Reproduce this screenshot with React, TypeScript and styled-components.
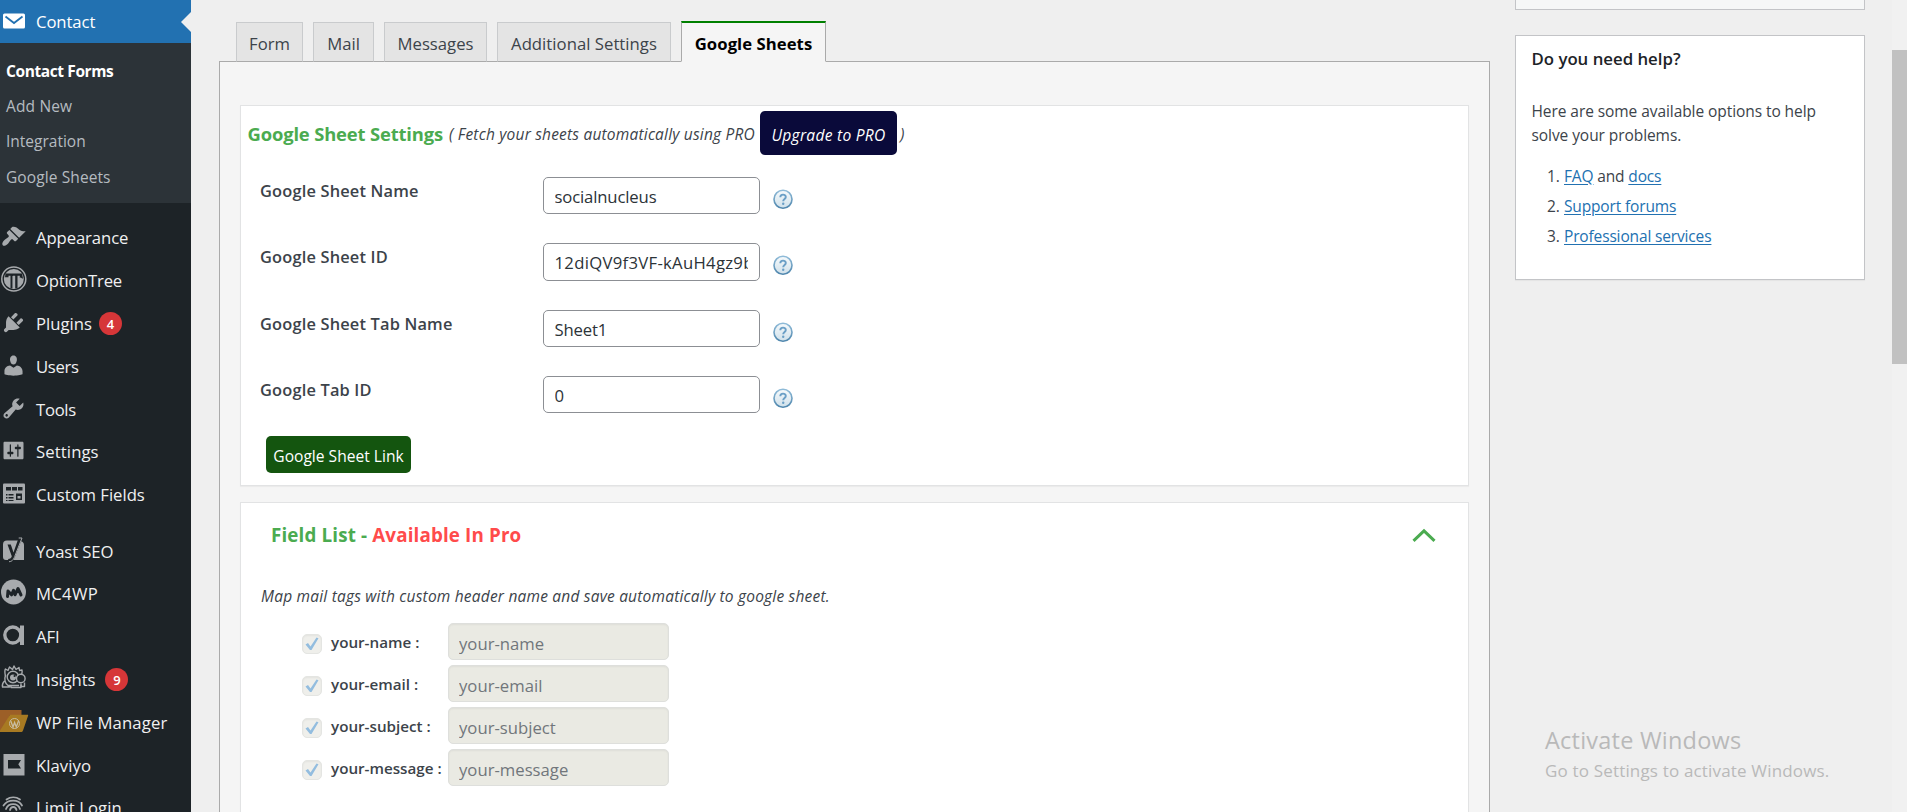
import React from "react";
import styled, { createGlobalStyle } from "styled-components";

const Global = createGlobalStyle`
  *, *::before, *::after { box-sizing: border-box; }
  body { margin: 0; overflow: hidden; background: #efefef; }
  body, input, button { font-family: "Open Sans", "Noto Sans", sans-serif; }
`;

const Page = styled.div`
  display: flex;
  width: 1907px;
  height: 812px;
  overflow: hidden;
  position: relative;
  color: #3c434a;
`;

/* ---------- admin menu ---------- */

const Sidebar = styled.nav`
  flex: none;
  width: 191px;
  background: #1d2327;
`;

const MenuRow = styled.a<{ $active?: boolean }>`
  display: flex;
  align-items: center;
  position: relative;
  height: ${(p) => (p.$active ? "43px" : "42.8px")};
  padding-left: 1px;
  color: ${(p) => (p.$active ? "#fff" : "#f0f0f1")};
  background: ${(p) => (p.$active ? "#2271b1" : "transparent")};
  font-size: 16.7px;
  white-space: nowrap;
`;

const ActiveArrow = styled.span`
  position: absolute;
  right: 0;
  top: 12px;
  border: 10px solid transparent;
  border-left-width: 0;
  border-right-color: #efefef;
`;

const IconSlot = styled.span`
  flex: none;
  display: flex;
  width: 35px;
  color: #a7aaad;
  margin-top: -2px;
`;

const MenuLabel = styled.span<{ $ls?: number }>`
  letter-spacing: ${(p) => p.$ls ?? -0.1}px;
`;

const Badge = styled.span<{ $gap: number }>`
  display: flex;
  align-items: center;
  justify-content: center;
  width: 23px;
  height: 23px;
  margin-left: ${(p) => p.$gap}px;
  border-radius: 50%;
  background: #d63638;
  color: #fff;
  font-size: 13px;
  font-weight: 600;
`;

const Submenu = styled.div`
  height: 160px;
  padding-top: 10px;
  background: #2c3338;
`;

const SubItem = styled.a<{ $current?: boolean; $ls?: number }>`
  display: flex;
  align-items: center;
  height: 35.3px;
  padding-left: 6px;
  font-size: 15.5px;
  font-weight: ${(p) => (p.$current ? 700 : 400)};
  color: ${(p) => (p.$current ? "#fff" : "#b5bbc0")};
  letter-spacing: ${(p) => p.$ls ?? 0}px;
`;

const MenuGroup = styled.div`
  padding-top: 13.6px;
`;

/* ---------- main column ---------- */

const Main = styled.main`
  flex: none;
  width: 1271px;
  margin-left: 28px;
  display: flex;
  flex-direction: column;
`;

const Tabs = styled.div`
  display: flex;
  align-items: flex-end;
  gap: 10px;
  height: 62px;
  margin-bottom: -1px;
  padding-left: 17px;
  z-index: 1;
`;

const Tab = styled.button<{ $w: number; $active?: boolean; $ls?: number }>`
  width: ${(p) => p.$w}px;
  height: ${(p) => (p.$active ? 41 : 40)}px;
  padding: 3px 0 0;
  border: 1px solid ${(p) => (p.$active ? "#aaa" : "#c9cbcd")};
  border-bottom-color: ${(p) => (p.$active ? "#f5f5f5" : "#aaa")};
  border-top: ${(p) => (p.$active ? "2px solid #008000" : "1px solid #c9cbcd")};
  background: ${(p) => (p.$active ? "#f5f5f5" : "#e4e4e4")};
  color: ${(p) => (p.$active ? "#000" : "#3c434a")};
  font-size: 16.7px;
  font-weight: ${(p) => (p.$active ? 700 : 400)};
  letter-spacing: ${(p) => p.$ls ?? 0}px;
  white-space: nowrap;
`;

const Panel = styled.section`
  flex: 1;
  border: 1px solid #aaa;
  border-bottom: 0;
  background: #f5f5f5;
  padding: 43px 20px 0;
  overflow: hidden;
`;

const Card = styled.div<{ $h: number }>`
  height: ${(p) => p.$h}px;
  margin-bottom: 16px;
  border: 1px solid #e2e3e4;
  background: #fff;
  box-shadow: 0 1px 1px rgba(0, 0, 0, 0.04);
`;

const SettingsHead = styled.div`
  display: flex;
  align-items: center;
  height: 44px;
  margin: 5px 0 0 6.5px;
  white-space: nowrap;
`;

const Heading = styled.h2<{ $size: number; $ls?: number }>`
  margin: 0;
  font-size: ${(p) => p.$size}px;
  font-weight: 700;
  color: #4bab50;
  letter-spacing: ${(p) => p.$ls ?? 0}px;
`;

const ProNote = styled.span`
  color: #ff4b4b;
`;

const Hint = styled.span<{ $ml?: number }>`
  margin-left: ${(p) => p.$ml ?? 0}px;
  padding-top: 2px;
  font-size: 15.5px;
  font-style: italic;
  color: #3c434a;
  letter-spacing: 0.2px;
`;

const UpgradeButton = styled.a`
  display: flex;
  align-items: center;
  justify-content: center;
  width: 137px;
  height: 44px;
  padding-top: 3px;
  margin-left: 5px;
  border-radius: 5px;
  background: #0a0a3a;
  color: #fff;
  font-size: 15.6px;
  font-style: italic;
  letter-spacing: 0.25px;
`;

const SettingRow = styled.div`
  display: flex;
  height: 66.3px;
  padding-left: 19px;
`;

const SettingsForm = styled.div`
  padding-top: 22px;
`;

const SettingLabel = styled.label`
  width: 283px;
  font-size: 16.4px;
  font-weight: 600;
  line-height: 27px;
  letter-spacing: 0.17px;
`;

const SettingInput = styled.input<{ $ls?: number }>`
  width: 217px;
  height: 37.400px;
  padding: 2px 11px 0 10.500px;
  border: 1px solid #8c8f94;
  border-radius: 5px;
  background: #fff;
  color: #2c3338;
  font-size: 16.7px;
  letter-spacing: ${(p) => p.$ls ?? -0.15}px;
  outline: none;
`;

const HelpSlot = styled.span`
  margin: 12px 0 0 13px;
`;

const LinkButton = styled.button`
  display: block;
  width: 145px;
  height: 37px;
  margin: -6px 0 0 25px;
  padding: 3px 0 0;
  border: 0;
  border-radius: 5px;
  background: #14550f;
  color: #fff;
  font-size: 15.6px;
  white-space: nowrap;
`;

const FieldHead = styled.div`
  display: flex;
  align-items: center;
  justify-content: space-between;
  height: 64px;
  padding: 0 30px 0 30px;
`;

const FieldHint = styled.p`
  margin: 16px 0 13px 20px;
  line-height: 27px;
`;

const FieldRow = styled.div`
  display: flex;
  align-items: center;
  height: 37px;
  margin: 0 0 5px 61px;
`;

const Check = styled.span`
  flex: none;
  display: flex;
  align-items: center;
  justify-content: center;
  width: 20px;
  height: 20px;
  margin-top: 4px;
  border: 1px solid #e4e5e2;
  border-radius: 5px;
  background: #efefeb;
  box-shadow: inset 0 1px 2px rgba(0, 0, 0, 0.05);
`;

const FieldLabel = styled.label`
  flex: none;
  width: 126px;
  padding-left: 9px;
  font-size: 15.2px;
  font-weight: 600;
  white-space: nowrap;
`;

const FieldInput = styled.input`
  width: 221px;
  height: 37px;
  padding: 3px 10px 0;
  border: 1px solid #dedfdc;
  border-radius: 5px;
  background: #eaeae3;
  box-shadow: inset 0 1px 2px rgba(0, 0, 0, 0.05);
  color: #71767b;
  font-size: 16.7px;
  outline: none;
`;

/* ---------- right column ---------- */

const Aside = styled.aside`
  flex: none;
  width: 350px;
  margin-left: 25px;
`;

const StubBox = styled.div`
  height: 10px;
  border: 1px solid #c3c4c7;
  border-top: 0;
  background: #f6f7f7;
  margin-bottom: 25px;
`;

const HelpBox = styled.div`
  height: 245px;
  padding: 9px 15.500px 0;
  border: 1px solid #c3c4c7;
  background: #fff;
  box-shadow: 0 1px 1px rgba(0, 0, 0, 0.04);
`;

const HelpTitle = styled.h3`
  margin: 0 0 27px;
  font-size: 16.8px;
  font-weight: 600;
  line-height: 27px;
  color: #1d2327;
`;

const HelpText = styled.p`
  margin: 0 0 13.5px;
  font-size: 15.5px;
  line-height: 24px;
  letter-spacing: -0.07px;
  white-space: nowrap;
`;

const HelpItem = styled.div`
  display: flex;
  height: 30.1px;
  align-items: center;
  padding-left: 15.500px;
  font-size: 15.5px;
  letter-spacing: -0.15px;
  white-space: pre;
`;

const Num = styled.span`
  width: 17px;
`;

const A = styled.a`
  color: #2271b1;
  text-decoration: underline;
  text-underline-offset: 2px;
`;

const Scrollbar = styled.div`
  flex: none;
  width: 15px;
  margin-left: auto;
  padding-top: 50px;
  background: #f1f1f1;
`;

const Thumb = styled.div`
  height: 314px;
  background: #c1c1c1;
`;

const Watermark = styled.div`
  position: absolute;
  left: 1545px;
  top: 722px;
  color: #b9b9b9;
  white-space: nowrap;
`;

const WatermarkTitle = styled.div`
  font-size: 23.5px;
  line-height: 36px;
  letter-spacing: 0.22px;
`;

const WatermarkText = styled.div`
  font-size: 17px;
  line-height: 25px;
  letter-spacing: 0.17px;
`;

/* ---------- drawings ---------- */

const dash: Record<string, string> = {
  appearance:
    "M14.48 11.06L7.41 3.99l1.5-1.5c.5-.56 2.3-.47 3.51.32 1.21.8 1.43 1.28 2.91 2.1 1.18.64 2.45 1.26 4.45.85zm-.71.71L6.7 4.7 4.93 6.47c-.39.39-.39 1.02 0 1.41l1.06 1.06c.39.39.39 1.03 0 1.42-.6.6-1.43 1.11-2.21 1.69-.35.26-.7.53-1.01.84C1.43 14.23.4 16.08 1.4 17.07c.99 1 2.84-.03 4.18-1.36.31-.31.58-.66.85-1.02.57-.78 1.08-1.61 1.69-2.21.39-.39 1.02-.39 1.41 0l1.06 1.06c.39.39 1.02.39 1.41 0z",
  plugins:
    "M13.11 4.36L9.87 7.6 8 5.73l3.24-3.24c.35-.34 1.05-.2 1.56.32.52.51.66 1.21.31 1.55zm-8 1.77l.91-1.12 9.01 9.01-1.19.84c-.71.71-2.63 1.16-3.82 1.16H6.14L4.9 17.26c-.59.59-1.54.59-2.12 0-.59-.58-.59-1.53 0-2.12l1.24-1.24v-3.88c0-1.13.4-3.19 1.09-3.89zm7.26 3.97l3.24-3.24c.34-.35 1.04-.21 1.55.31.52.51.66 1.21.31 1.55l-3.24 3.25z",
  users:
    "M10 9.25c-2.27 0-2.73-3.44-2.73-3.44C7 4.02 7.82 2 9.97 2c2.16 0 2.98 2.02 2.71 3.81 0 0-.41 3.44-2.68 3.44zm0 2.57L12.72 10c2.39 0 4.52 2.33 4.52 4.53v2.49s-3.65 1.13-7.24 1.13c-3.65 0-7.24-1.13-7.24-1.13v-2.49c0-2.25 1.94-4.48 4.47-4.48z",
  tools:
    "M16.68 9.77c-1.34 1.34-3.3 1.67-4.95.99l-5.41 6.52c-.99.99-2.59.99-3.58 0s-.99-2.59 0-3.57l6.52-5.42c-.68-1.65-.35-3.61.99-4.95 1.28-1.28 3.12-1.62 4.72-1.06l-2.89 2.89 2.82 2.82 2.86-2.87c.53 1.58.18 3.39-1.08 4.65zM3.81 16.21c.4.39 1.04.39 1.43 0 .4-.4.4-1.04 0-1.43-.39-.4-1.03-.4-1.43 0-.39.39-.39 1.03 0 1.43z",
  settings:
    "M18 16V4c0-.55-.45-1-1-1H3c-.55 0-1 .45-1 1v12c0 .55.45 1 1 1h14c.55 0 1-.45 1-1zM8 11h1c.55 0 1 .45 1 1s-.45 1-1 1H8v1.5c0 .28-.22.5-.5.5s-.5-.22-.5-.5V13H6c-.55 0-1-.45-1-1s.45-1 1-1h1V5.5c0-.28.22-.5.5-.5s.5.22.5.5V11zm5-2h-1c-.55 0-1-.45-1-1s.45-1 1-1h1V5.5c0-.28.22-.5.5-.5s.5.22.5.5V7h1c.55 0 1 .45 1 1s-.45 1-1 1h-1v5.5c0 .28-.22.5-.5.5s-.5-.22-.5-.5V9z",
};

const Dash = ({ name }: { name: string }) => (
  <svg width="25" height="25" viewBox="0 0 20 20" fill="currentColor">
    <path d={dash[name]} />
  </svg>
);

const Glyph = ({ children }: { children: React.ReactNode }) => (
  <svg width="27" height="27" viewBox="0 0 27 27" fill="currentColor" overflow="visible">
    {children}
  </svg>
);

const MailIcon = () => (
  <Glyph>
    <rect x="2" y="6.5" width="22" height="15" rx="1.5" fill="#fff" />
    <path d="M4.5 9.5L13 16l8.500-6.500" fill="none" stroke="#2271b1" strokeWidth="1.8" />
  </Glyph>
);

const OptionTreeIcon = () => (
  <Glyph>
    <circle cx="12.800" cy="13" r="12" fill="none" stroke="currentColor" strokeWidth="1.500" />
    <circle cx="12.800" cy="13" r="10" />
    <path d="M4.500 7.500h16.500l1 5h-3.200v-2.700h-2.300v12.400h-2.300V9.800h-2.300v12.400H9.500V9.800H7.500v1.400H4z" fill="#1d2327" />
    <path d="M11.500 10h2v12.800h-2z" />
    <circle cx="19.500" cy="13" r="1.500" />
  </Glyph>
);

const FieldsIcon = () => (
  <Glyph>
    <rect x="2" y="3.500" width="22" height="20" rx="1" />
    <g fill="#1d2327">
      <rect x="5" y="7" width="5" height="3.500" />
      <rect x="11" y="7" width="5" height="3.500" />
      <rect x="17" y="7" width="4.500" height="3.500" />
      <rect x="5" y="14" width="1.500" height="1.500" />
      <rect x="7.500" y="14" width="5" height="1.500" />
      <rect x="5" y="17" width="1.500" height="1.500" />
      <rect x="7.500" y="17" width="5" height="1.500" />
      <rect x="5" y="20" width="1.500" height="1" />
      <rect x="7.500" y="20" width="5" height="1" />
      <rect x="15" y="13.500" width="6" height="6.500" />
    </g>
    <rect x="16.500" y="16" width="3" height="2.500" />
  </Glyph>
);

const YoastIcon = () => (
  <Glyph>
    <path d="M6 3.500h11.500L11 23H5a3 3 0 01-3-3V7.500a4 4 0 014-4z" />
    <path d="M20 4.200a4 4 0 013 4V23H12.500z" />
    <path d="M17.700 0.500h3.600L14 19.500c-1.700 4.200-3.500 5.400-6.800 5.400v-3c2.200 0 3-.8 3.600-2.700L6.500 7.500h3.300l2.700 8z" fill="#1d2327" />
    <path d="M17.700 1h3.300L13.700 19.500c-1.500 4-3.200 5-5.700 5.200" fill="none" stroke="currentColor" strokeWidth="1" />
  </Glyph>
);

const McIcon = () => (
  <Glyph>
    <circle cx="12.500" cy="13" r="12.500" />
    <path d="M6.500 17.500l.5-5.500 3.500 3.800 2-4.500 1.500 4.500L17 9.500l3 6.500" fill="none" stroke="#1d2327" strokeWidth="3" strokeLinejoin="round" strokeLinecap="round" />
  </Glyph>
);

const AfiIcon = () => (
  <Glyph>
    <circle cx="11.800" cy="13" r="8" fill="none" stroke="currentColor" strokeWidth="3.400" />
    <rect x="19" y="3.500" width="4" height="19.500" />
  </Glyph>
);

const InsightsIcon = () => (
  <Glyph>
    <g fill="none" stroke="currentColor" strokeWidth="1.400" strokeLinejoin="round">
      <path d="M4.500 11C3.500 7 3.500 5.500 4.500 4l2.500 1.500L8.500 2l3 2.500L13 1l2 3.500L18 2.500l.5 3L21 5c.5 2 .3 3-.5 5" />
      <path d="M4.500 10.500C3 14 4 18.500 7 20.500h11M3.500 16c-2 2-2.500 4-2 6h7v-2M10 20v2.500h10V20" />
      <circle cx="12" cy="12" r="5.800" />
      <path d="M20 18.500v3h3.500v-4" />
    </g>
    <circle cx="19.800" cy="13.500" r="4.300" fill="#1d2327" stroke="currentColor" strokeWidth="1.400" />
    <circle cx="12" cy="12.500" r="3" />
    <circle cx="13.500" cy="11" r="1" fill="#1d2327" />
  </Glyph>
);

const FolderIcon = () => (
  <Glyph>
    <path d="M-1 2h21.500v5H9L1 24h-2z" fill="#9c5f27" />
    <path d="M9 6.800h17.500c.7 0 .8.500.5 1.200L22 22.500c-.5 1-1 1.500-2 1.500H-1v-1.500z" fill="#a87a22" />
    <circle cx="13.500" cy="15.500" r="5" fill="none" stroke="#c9bda0" strokeWidth="1" />
    <path d="M9.800 13l2.200 6 1.600-4.500 1.700 4.500 2.200-6" fill="none" stroke="#c9bda0" strokeWidth="1.300" />
  </Glyph>
);

const KlaviyoIcon = () => (
  <Glyph>
    <rect x="2.500" y="3" width="21" height="21.500" />
    <path d="M7 9h13l-2.700 4.300L20 17.500H7z" fill="#1d2327" />
  </Glyph>
);

const LoginIcon = () => (
  <Glyph>
    <g fill="none" stroke="currentColor" strokeWidth="1.800" strokeLinecap="round">
      <path d="M5.500 6.500c4-2.800 9.500-2.800 13.500 0" />
      <path d="M2.500 12.500c4.500-6.500 15-6.500 18.500 0" />
      <path d="M5 16c2.500-6.500 12-6.500 14 0" />
      <path d="M9 17c1-4 5.500-4 6.500 0" />
    </g>
  </Glyph>
);

const HelpIcon = () => (
  <svg width="20" height="21" viewBox="0 0 20 21">
    <defs>
      <linearGradient id="ring" x1="0" y1="0" x2="0" y2="1">
        <stop offset="0" stopColor="#8fbbd8" />
        <stop offset="1" stopColor="#4f86ad" />
      </linearGradient>
      <linearGradient id="disc" x1="0" y1="0" x2="0" y2="1">
        <stop offset="0" stopColor="#f6fafc" />
        <stop offset="1" stopColor="#cfe0ea" />
      </linearGradient>
    </defs>
    <circle cx="10" cy="10.300" r="9" fill="url(#disc)" stroke="url(#ring)" strokeWidth="1.600" />
    <path d="M7.300 8.300c0-3.600 5.500-3.400 5.500-.3 0 2-2.600 2-2.600 4.300" fill="none" stroke="#6a9fc6" strokeWidth="1.900" />
    <circle cx="10.200" cy="14.700" r="1.200" fill="#6a9fc6" />
  </svg>
);

const TickIcon = () => (
  <svg width="16" height="16" viewBox="0 0 16 16">
    <path d="M1.500 8.500l2.500-1.500 2.500 3.500L12.500 1.500l2 .8L7.500 14H6z" fill="#93bddf" />
  </svg>
);

const ChevronIcon = () => (
  <svg width="28" height="16" viewBox="0 0 28 16">
    <path d="M3.500 13.800L14 3.800l10.500 10" fill="none" stroke="#4bab50" strokeWidth="3" />
  </svg>
);

type Entry = { icon: React.ReactNode; text: string; ls?: number; badge?: string; gap?: number };

const firstGroup: Entry[] = [
  { icon: <Dash name="appearance" />, text: "Appearance" },
  { icon: <OptionTreeIcon />, text: "OptionTree", ls: -0.25 },
  { icon: <Dash name="plugins" />, text: "Plugins", ls: 0, badge: "4", gap: 7 },
  { icon: <Dash name="users" />, text: "Users", ls: -0.3 },
  { icon: <Dash name="tools" />, text: "Tools", ls: -0.3 },
  { icon: <Dash name="settings" />, text: "Settings", ls: 0.1 },
  { icon: <FieldsIcon />, text: "Custom Fields", ls: -0.02 },
];

const secondGroup: Entry[] = [
  { icon: <YoastIcon />, text: "Yoast SEO" },
  { icon: <McIcon />, text: "MC4WP", ls: 0.3 },
  { icon: <AfiIcon />, text: "AFI" },
  { icon: <InsightsIcon />, text: "Insights", badge: "9", gap: 10 },
  { icon: <FolderIcon />, text: "WP File Manager", ls: 0.12 },
  { icon: <KlaviyoIcon />, text: "Klaviyo", ls: 0.05 },
  { icon: <LoginIcon />, text: "Limit Login", ls: 0.05 },
];

const settings = [
  { label: "Google Sheet Name", value: "socialnucleus" },
  { label: "Google Sheet ID", value: "12diQV9f3VF-kAuH4gz9b", ls: 0.29 },
  { label: "Google Sheet Tab Name", value: "Sheet1" },
  { label: "Google Tab ID", value: "0" },
];

const fields = ["your-name", "your-email", "your-subject", "your-message"];

const Menu = ({ items }: { items: Entry[] }) => (
  <MenuGroup>
    {items.map((m) => (
      <MenuRow key={m.text}>
        <IconSlot>{m.icon}</IconSlot>
        <MenuLabel $ls={m.ls}>{m.text}</MenuLabel>
        {m.badge && <Badge $gap={m.gap ?? 7}>{m.badge}</Badge>}
      </MenuRow>
    ))}
  </MenuGroup>
);

export default function App() {
  return (
    <Page>
      <Global />
      <Sidebar>
        <MenuRow $active>
          <IconSlot><MailIcon /></IconSlot>
          <MenuLabel>Contact</MenuLabel>
          <ActiveArrow />
        </MenuRow>
        <Submenu>
          <SubItem $current $ls={-0.4}>Contact Forms</SubItem>
          <SubItem $ls={0.15}>Add New</SubItem>
          <SubItem>Integration</SubItem>
          <SubItem $ls={0.1}>Google Sheets</SubItem>
        </Submenu>
        <Menu items={firstGroup} />
        <Menu items={secondGroup} />
      </Sidebar>

      <Main>
        <Tabs>
          <Tab $w={67}>Form</Tab>
          <Tab $w={61}>Mail</Tab>
          <Tab $w={103}>Messages</Tab>
          <Tab $w={174} $ls={0.03}>Additional Settings</Tab>
          <Tab $w={145} $active $ls={0.05}>Google Sheets</Tab>
        </Tabs>
        <Panel>
          <Card $h={381}>
            <SettingsHead>
              <Heading $size={18.4} $ls={-0.15}>Google Sheet Settings</Heading>
              <Hint $ml={6}>( Fetch your sheets automatically using PRO</Hint>
              <UpgradeButton>Upgrade to PRO</UpgradeButton>
              <Hint $ml={3}>)</Hint>
            </SettingsHead>
            <SettingsForm>
              {settings.map((s) => (
                <SettingRow key={s.label}>
                  <SettingLabel>{s.label}</SettingLabel>
                  <SettingInput readOnly value={s.value} $ls={s.ls} />
                  <HelpSlot><HelpIcon /></HelpSlot>
                </SettingRow>
              ))}
            </SettingsForm>
            <LinkButton>Google Sheet Link</LinkButton>
          </Card>
          <Card $h={400}>
            <FieldHead>
              <Heading $size={18.8} $ls={0.15}>Field List - <ProNote>Available In Pro</ProNote></Heading>
              <ChevronIcon />
            </FieldHead>
            <FieldHint>
              <Hint>Map mail tags with custom header name and save automatically to google sheet.</Hint>
            </FieldHint>
            {fields.map((f) => (
              <FieldRow key={f}>
                <Check><TickIcon /></Check>
                <FieldLabel>{f} :</FieldLabel>
                <FieldInput readOnly value={f} />
              </FieldRow>
            ))}
          </Card>
        </Panel>
      </Main>

      <Aside>
        <StubBox />
        <HelpBox>
          <HelpTitle>Do you need help?</HelpTitle>
          <HelpText>Here are some available options to help<br />solve your problems.</HelpText>
          <HelpItem><Num>1.</Num><A>FAQ</A> and <A>docs</A></HelpItem>
          <HelpItem><Num>2.</Num><A>Support forums</A></HelpItem>
          <HelpItem><Num>3.</Num><A>Professional services</A></HelpItem>
        </HelpBox>
      </Aside>

      <Scrollbar><Thumb /></Scrollbar>

      <Watermark>
        <WatermarkTitle>Activate Windows</WatermarkTitle>
        <WatermarkText>Go to Settings to activate Windows.</WatermarkText>
      </Watermark>
    </Page>
  );
}
